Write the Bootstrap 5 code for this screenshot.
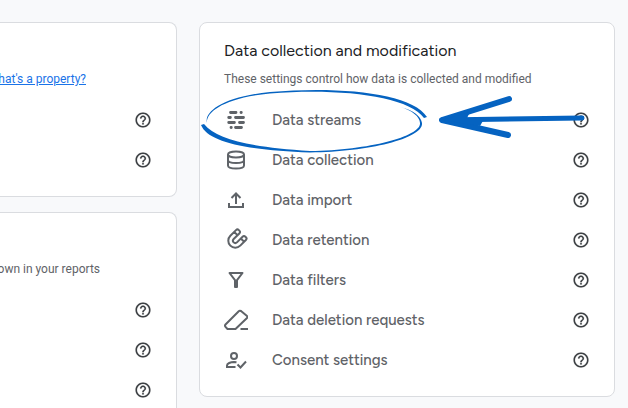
<!DOCTYPE html>
<html lang="en">
<head>
<meta charset="utf-8">
<meta name="viewport" content="width=device-width, initial-scale=1">
<title>Admin settings</title>
<link href="https://cdn.jsdelivr.net/npm/bootstrap@5.3.0/dist/css/bootstrap.min.css" rel="stylesheet">
<style>
body{background:#f8f9fb;font-family:Roboto,"Liberation Sans",sans-serif;color:#202124;overflow:hidden}
.page{padding:22px 13px 0 0;gap:22px}
.side{flex:0 0 177px;gap:15px}
.panel{border:1px solid #dadce0;border-radius:8px;padding:15px 24px 16px;background:#fff}
.side .panel{border-left:0;border-radius:0 8px 8px 0}
.panel-title{font-size:16px;line-height:26px;min-height:26px;margin:0 0 6px;font-family:Figtree,Lato,Roboto,sans-serif;font-weight:400}
.panel-note{font-size:12px;line-height:18px;margin:0 0 12px;color:#5f6368;white-space:nowrap}
.side .panel-note{display:flex;justify-content:flex-end;margin-left:-24px}
.note-link{width:86px}
.note-reports{width:100px}
.panel-note a{color:#1a73e8}
.setting{height:40px}
.setting a{color:#5f6368;font-size:15px;line-height:24px;gap:24px;font-family:Figtree,Lato,Roboto,sans-serif;font-weight:500}
.help{width:18px;height:18px;color:#3c4043}
.help svg{width:18px;height:18px;display:block;overflow:visible}
.glyph{width:24px;height:24px;flex:none;fill:none;stroke:#5f6368;stroke-width:2}
.drawn{position:absolute;left:0;top:62px;width:390px;height:75px;pointer-events:none}
</style>
</head>
<body>
<svg width="0" height="0" class="d-none"><symbol id="q" viewBox="0 0 24 24"><path fill="currentColor" stroke="currentColor" stroke-width=".2" d="M11 18h2v-2h-2v2zm1-16C6.480 2 2 6.480 2 12s4.480 10 10 10 10-4.480 10-10S17.520 2 12 2zm0 18c-4.410 0-8-3.590-8-8s3.590-8 8-8 8 3.590 8 8-3.590 8-8 8zm0-14c-2.210 0-4 1.790-4 4h2c0-1.100.9-2 2-2s2 .9 2 2c0 2-3 1.750-3 5h2c0-2.250 3-2.500 3-5 0-2.210-1.790-4-4-4z"/></symbol></svg>
<main class="page d-flex align-items-start">
 <div class="side d-flex flex-column">
  <section class="panel">
   <h2 class="panel-title"></h2>
   <p class="panel-note note-link"><a href="#">What's a property?</a></p>
   <div class="setting d-flex align-items-center justify-content-end"><button class="help btn p-0 border-0" aria-label="Help"><svg><use href="#q"/></svg></button></div>
   <div class="setting d-flex align-items-center justify-content-end"><button class="help btn p-0 border-0" aria-label="Help"><svg><use href="#q"/></svg></button></div>
  </section>
  <section class="panel">
   <h2 class="panel-title"></h2>
   <p class="panel-note note-reports">shown in your reports</p>
   <div class="setting d-flex align-items-center justify-content-end"><button class="help btn p-0 border-0" aria-label="Help"><svg><use href="#q"/></svg></button></div>
   <div class="setting d-flex align-items-center justify-content-end"><button class="help btn p-0 border-0" aria-label="Help"><svg><use href="#q"/></svg></button></div>
   <div class="setting d-flex align-items-center justify-content-end"><button class="help btn p-0 border-0" aria-label="Help"><svg><use href="#q"/></svg></button></div>
  </section>
 </div>
 <section class="panel position-relative flex-grow-1">
  <h2 class="panel-title">Data collection and modification</h2>
  <p class="panel-note">These settings control how data is collected and modified</p>
  <div class="setting d-flex align-items-center justify-content-between">
   <a href="#" class="d-flex align-items-center text-decoration-none"><svg class="glyph" viewBox="0 0 24 24"><path stroke-width="2.800" stroke-linecap="round" d="M6.500 4.500h5.500M17 4.500h.3M4.700 9.500h1.700M11.500 9.500h8M4.700 14.500h5.700M15.500 14.500h4M7 19.500h.3M11.500 19.500h6"/></svg>Data streams</a>
   <button class="help btn p-0 border-0" aria-label="Help"><svg><use href="#q"/></svg></button></div>
  <div class="setting d-flex align-items-center justify-content-between">
   <a href="#" class="d-flex align-items-center text-decoration-none"><svg class="glyph" viewBox="0 0 24 24"><ellipse cx="12" cy="6.500" rx="8" ry="3"/><path d="M4 6.500v11c0 1.800 3.500 3 8 3s8-1.200 8-3v-11M4 12c0 1.800 3.500 3 8 3s8-1.200 8-3"/></svg>Data collection</a>
   <button class="help btn p-0 border-0" aria-label="Help"><svg><use href="#q"/></svg></button></div>
  <div class="setting d-flex align-items-center justify-content-between">
   <a href="#" class="d-flex align-items-center text-decoration-none"><svg class="glyph" viewBox="0 0 24 24"><path d="M12 16V6M7.500 10 12 5.500l4.500 4.500M5 15v4h14v-4"/></svg>Data import</a>
   <button class="help btn p-0 border-0" aria-label="Help"><svg><use href="#q"/></svg></button></div>
  <div class="setting d-flex align-items-center justify-content-between">
   <a href="#" class="d-flex align-items-center text-decoration-none"><svg class="glyph" viewBox="0 0 24 24"><path transform="rotate(45 12 12)" d="M5 5q0-2 2-2h.7q2 0 2 2V13a2.300 2.300 0 0 0 4.600 0V5q0-2 2-2h.7q2 0 2 2V13a7 7 0 0 1-14 0zM5 7.500h4.700M14.300 7.500H19"/></svg>Data retention</a>
   <button class="help btn p-0 border-0" aria-label="Help"><svg><use href="#q"/></svg></button></div>
  <div class="setting d-flex align-items-center justify-content-between">
   <a href="#" class="d-flex align-items-center text-decoration-none"><svg class="glyph" viewBox="0 0 24 24"><path d="M5.500 5h13L13 12.200V19h-2v-6.800z" stroke-linejoin="round"/></svg>Data filters</a>
   <button class="help btn p-0 border-0" aria-label="Help"><svg><use href="#q"/></svg></button></div>
  <div class="setting d-flex align-items-center justify-content-between">
   <a href="#" class="d-flex align-items-center text-decoration-none"><svg class="glyph" viewBox="0 0 24 24"><path stroke-linejoin="round" d="M14.500 3.500 1.500 16.500q-1 1.200 0 2.300l2 2.200h8L23 10q.7-1 0-2l-6-5q-1.500-.8-2.500.5zM16.500 21H24"/></svg>Data deletion requests</a>
   <button class="help btn p-0 border-0" aria-label="Help"><svg><use href="#q"/></svg></button></div>
  <div class="setting d-flex align-items-center justify-content-between">
   <a href="#" class="d-flex align-items-center text-decoration-none"><svg class="glyph" viewBox="0 0 24 24"><circle cx="10" cy="8" r="3"/><path d="M11.500 19H3v-1.500c0-2 3.500-3.500 7-3.500l2.500.3M13.500 16.500l3 3 5.500-6"/></svg>Consent settings</a>
   <button class="help btn p-0 border-0" aria-label="Help"><svg><use href="#q"/></svg></button></div>
  <svg class="drawn" viewBox="200 85 390 75" fill="#0563c1" aria-hidden="true">
   <path d="M207 123C204 112 222 97 270 92C340 86 412 93 427 117L424 118C408 96 340 88 270 93.500C224 98 206 112 207 123z"/>
   <path d="M201 125C208 142 245 150 310 152.500C370 152 424 138 422 123C421 116 413 110 400 107C412 110 420 117 420 123C421 136 370 150 310 151C250 147 217 140 204 124z"/>
   <g fill="none" stroke="#0563c1" stroke-linecap="round"><path stroke-width="5" d="M442 120l140-2"/><path stroke-width="6" stroke-linejoin="round" d="M509 99l-67 21 66 15"/></g>
   <path d="M442 120l28-8-3 6 17 1-4 7z"/>
  </svg>
 </section>
</main>
<script src="https://cdn.jsdelivr.net/npm/bootstrap@5.3.0/dist/js/bootstrap.bundle.min.js"></script>
</body>
</html>
